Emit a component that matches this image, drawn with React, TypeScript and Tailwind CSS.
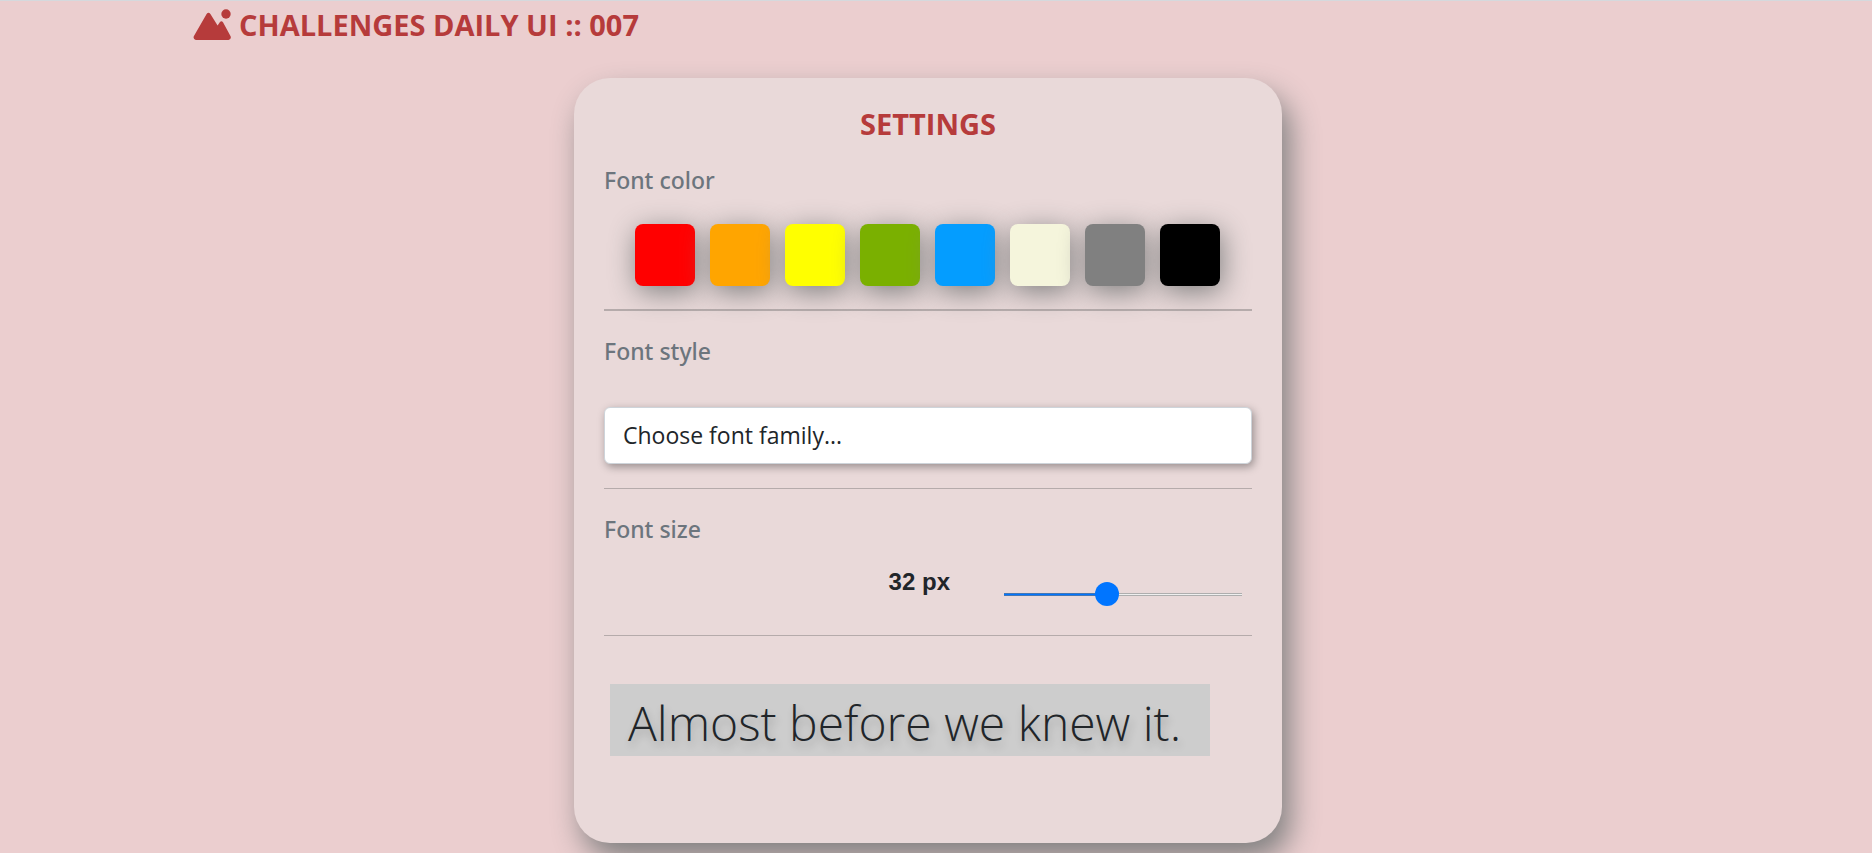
import { useState } from "react";
import type { CSSProperties, ReactNode } from "react";

const COLORS = [
  { name: "Red", className: "bg-[#ff0000]", value: "#ff0000" },
  { name: "Orange", className: "bg-[#ffa500]", value: "#ffa500" },
  { name: "Yellow", className: "bg-[#ffff00]", value: "#ffff00" },
  { name: "Green", className: "bg-[#7ab000]", value: "#7ab000" },
  { name: "Blue", className: "bg-[#049dff]", value: "#049dff" },
  { name: "Beige", className: "bg-[#f5f5dc]", value: "#f5f5dc" },
  { name: "Gray", className: "bg-[#808080]", value: "#808080" },
  { name: "Black", className: "bg-[#000000]", value: "#000000" },
];

const FAMILIES = ["Noto Sans", "Roboto", "Lato", "Inter"];
const MAX_SIZE = 75;

function MountainIcon() {
  return (
    <svg aria-hidden="true" viewBox="0 0 38 32" className="h-8 w-[38px] fill-current">
      <circle cx="33" cy="5" r="4.7" />
      <path d="M13.6 5q1.900-2.400 3.800 0l7.200 11.600 2.200-3.400q1.600-1.800 3.200 0l7.600 14q1 3-2 3.700H2.800q-3-.7-2-3.700z" />
    </svg>
  );
}

function SectionTitle({ children }: { children: ReactNode }) {
  return (
    <h2 className="font-['Noto_Sans',sans-serif] text-[23px] leading-8 font-medium text-[#6c757d]">{children}</h2>
  );
}

export default function App() {
  const [color, setColor] = useState("#212529");
  const [family, setFamily] = useState("");
  const [size, setSize] = useState(32);
  const filled = `calc(12px + (100% - 24px) * ${size / MAX_SIZE})`;

  return (
    <div className="min-h-screen border-t border-[#d5d9dd] bg-[#ebcecf] pr-8 pb-[9px] pl-4 font-['Open_Sans','Noto_Sans',sans-serif] text-[#212529]">
      <header className="mx-auto flex max-w-[1470px] items-center gap-2 pt-[6px] text-[#b63b3b]">
        <MountainIcon />
        <h1 className="text-[29px] leading-9 font-bold">CHALLENGES DAILY UI :: 007</h1>
      </header>

      <main className="mx-auto mt-[35px] max-w-[708px] rounded-[36px] bg-[#e9d9d9] px-[30px] pt-[26px] pb-[87px] shadow-[8px_16px_30px_#808080]">
        <h2 className="text-center text-[29px] leading-10 font-bold text-[#b63b3b]">SETTINGS</h2>

        <section className="border-b-2 border-[#b5abab] pt-5 pb-[23px]">
          <SectionTitle>Font color</SectionTitle>
          <div className="flex flex-wrap justify-center gap-[15px] pt-7 pr-px">
            {COLORS.map((c) => (
              <button
                key={c.name}
                type="button"
                aria-label={c.name}
                onClick={() => setColor(c.value)}
                className={`h-[62px] w-[60px] rounded-lg shadow-[2px_6px_28px_#808080] ${c.className}`}
              />
            ))}
          </div>
        </section>

        <section className="border-b border-[#b5abab] pt-6 pb-6">
          <SectionTitle>
            <label htmlFor="family">Font style</label>
          </SectionTitle>
          <select
            id="family"
            value={family}
            onChange={(e) => setFamily(e.target.value)}
            className="mt-10 block h-[57px] w-full appearance-none rounded-md border border-[#ced4da] bg-white px-[18px] text-[23px] shadow-[2px_3px_8px_rgba(0,0,0,0.35)]"
          >
            <option value="">Choose font family...</option>
            {FAMILIES.map((f) => (
              <option key={f}>{f}</option>
            ))}
          </select>
        </section>

        <section className="border-b border-[#b5abab] pt-6 pb-[29px]">
          <SectionTitle>
            <label htmlFor="size">Font size</label>
          </SectionTitle>
          <div className="flex items-start justify-end gap-[54px] pt-5 pr-[10px]">
            <output htmlFor="size" className="font-['Liberation_Sans',Arial,sans-serif] text-2xl leading-[34px] font-bold">
              {size} px
            </output>
            <input
              id="size"
              type="range"
              min={0}
              max={MAX_SIZE}
              value={size}
              onChange={(e) => setSize(Number(e.target.value))}
              style={{ "--filled": filled } as CSSProperties}
              className="mt-[17px] h-6 w-[238px] appearance-none bg-transparent [&::-webkit-slider-runnable-track]:h-[3px] [&::-webkit-slider-runnable-track]:bg-[linear-gradient(rgba(120,120,120,0.55)_1px,transparent_1px,transparent_2px,rgba(120,120,120,0.55)_2px),linear-gradient(to_right,#0075ff_var(--filled),#efefef_var(--filled))] [&::-webkit-slider-thumb]:-mt-[11px] [&::-webkit-slider-thumb]:size-6 [&::-webkit-slider-thumb]:appearance-none [&::-webkit-slider-thumb]:rounded-full [&::-webkit-slider-thumb]:bg-[#0075ff]"
            />
          </div>
        </section>

        <p
          style={{ color, fontFamily: family || undefined, fontSize: size * 1.5 }}
          className="mx-[6px] mt-12 max-w-[600px] bg-[#cdcdcd] px-[18px] pt-[6px] leading-[66px] font-light text-shadow-[2px_5px_8px_rgba(0,0,0,0.2)]"
        >
          Almost before we knew it.
        </p>
      </main>
    </div>
  );
}
